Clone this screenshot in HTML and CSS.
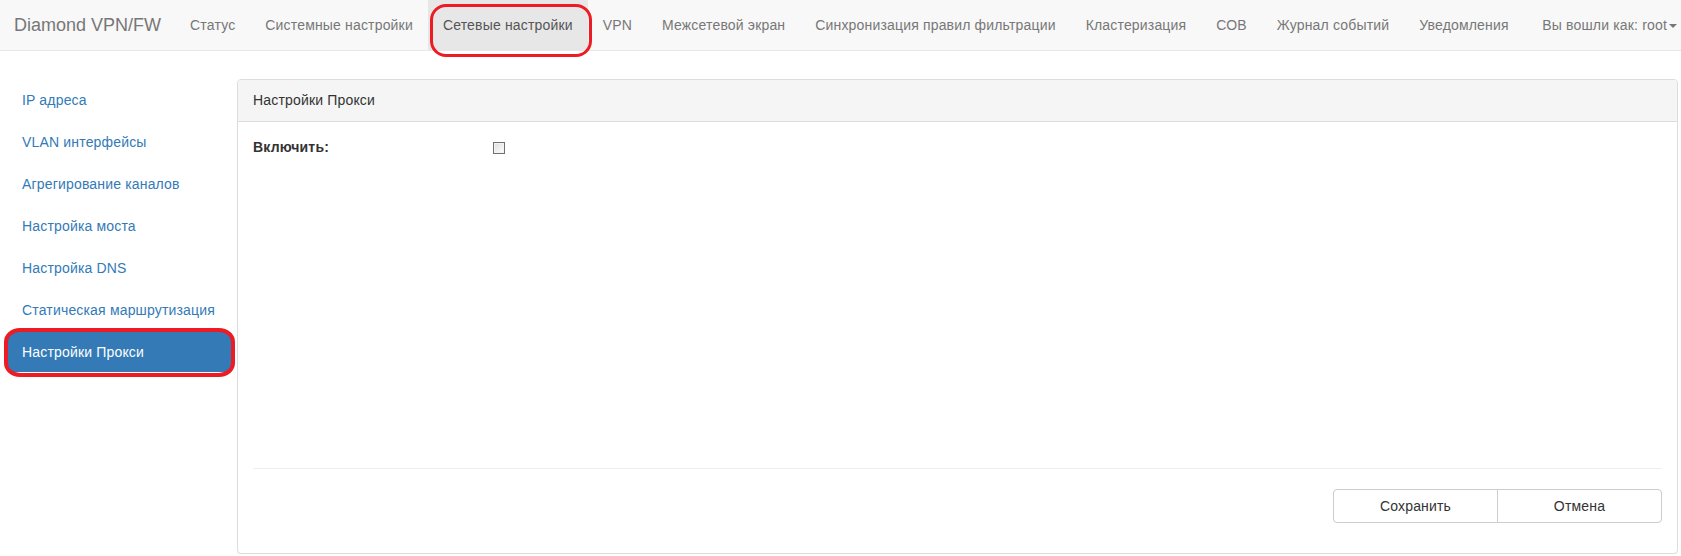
FILE: index.html
```html
<!DOCTYPE html>
<html lang="ru">
<head>
    <meta charset="UTF-8">
    <meta name="viewport" content="width=device-width, initial-scale=1.0">
    <title>Diamond VPN/FW - Настройки Прокси</title>
    <link rel="stylesheet" href="styles.css">
</head>
<body>

    <nav class="navbar">
        <a href="#" class="navbar-brand">Diamond VPN/FW</a>
        <ul class="nav-links">
            <li><a href="#">Статус</a></li>
            <li><a href="#">Системные настройки</a></li>
            <li class="active marked"><a href="#">Сетевые настройки</a></li>
            <li><a href="#">VPN</a></li>
            <li><a href="#">Межсетевой экран</a></li>
            <li><a href="#">Синхронизация правил фильтрации</a></li>
            <li><a href="#">Кластеризация</a></li>
            <li><a href="#">СОВ</a></li>
            <li><a href="#">Журнал событий</a></li>
            <li><a href="#">Уведомления</a></li>
        </ul>
        <ul class="nav-links nav-right">
            <li><a href="#" class="user-menu">Вы вошли как: root<span class="caret"></span></a></li>
        </ul>
    </nav>

    <div class="page">
        <ul class="side-nav">
            <li><a href="#">IP адреса</a></li>
            <li><a href="#">VLAN интерфейсы</a></li>
            <li><a href="#">Агрегирование каналов</a></li>
            <li><a href="#">Настройка моста</a></li>
            <li><a href="#">Настройка DNS</a></li>
            <li><a href="#">Статическая маршрутизация</a></li>
            <li class="active marked"><a href="#">Настройки Прокси</a></li>
        </ul>

        <div class="panel">
            <div class="panel-heading">Настройки Прокси</div>
            <div class="panel-body">
                <div class="form-fields">
                    <div class="form-row">
                        <label class="form-label" for="proxy-enable">Включить:</label>
                        <input type="checkbox" id="proxy-enable" class="check">
                    </div>
                </div>
                <hr class="divider">
                <div class="form-actions">
                    <div class="btn-group">
                        <button class="btn">Сохранить</button>
                        <button class="btn">Отмена</button>
                    </div>
                </div>
            </div>
        </div>
    </div>

</body>
</html>
```

FILE: styles.css
```css
* {
    box-sizing: border-box;
}
body {
    margin: 0;
    background-color: #ffffff;
    font-family: "Liberation Sans", Arial, sans-serif;
    font-size: 14px;
    line-height: 20px;
    letter-spacing: 0.17px;
    color: #333;
}
a {
    text-decoration: none;
}

/* top bar */
.navbar {
    display: flex;
    align-items: stretch;
    height: 51px;
    background-color: #f8f8f8;
    border-bottom: 1px solid #e7e7e7;
}
.navbar-brand {
    padding: 15px 14px 15px 14px;
    font-size: 18px;
    line-height: 20px;
    letter-spacing: 0;
    color: #777;
}
.nav-links {
    display: flex;
    margin: 0;
    padding: 0;
    list-style: none;
}
.nav-links li {
    position: relative;
}
.nav-links a {
    display: block;
    padding: 15px 15px;
    color: #777;
}
.nav-links .active a {
    background-color: #e7e7e7;
    color: #555;
}
.nav-right {
    margin-left: auto;
}
.nav-right .user-menu {
    padding-right: 4px;
}
.caret {
    display: inline-block;
    width: 0;
    height: 0;
    margin-left: 2px;
    vertical-align: middle;
    border-top: 4px solid #777;
    border-right: 4px solid transparent;
    border-left: 4px solid transparent;
}

/* red annotation rings from the original screenshot */
.marked::after {
    content: "";
    position: absolute;
    border: 3px solid #ed1c24;
    border-radius: 16px;
    pointer-events: none;
}
.nav-links .marked::after {
    left: 2px;
    right: -4px;
    top: 4px;
    bottom: -7px;
}
.side-nav .marked::after {
    left: -4px;
    right: -3px;
    top: -4px;
    bottom: -5px;
    border-width: 4px;
    border-radius: 16px / 14px;
}

/* page body */
.page {
    display: flex;
    align-items: flex-start;
    padding: 28px 3px 0 8px;
}
.side-nav {
    width: 224px;
    flex-shrink: 0;
    margin: 1px 5px 0 0;
    padding: 0;
    list-style: none;
}
.side-nav li {
    position: relative;
}
.side-nav li + li {
    margin-top: 2px;
}
.side-nav a {
    display: block;
    padding: 10px 14px;
    border-radius: 4px;
    color: #337ab7;
}
.side-nav .active a {
    background-color: #337ab7;
    color: #fff;
}

.panel {
    flex: 1;
    background-color: #fff;
    border: 1px solid #ddd;
    border-radius: 4px;
    box-shadow: 0 1px 1px rgba(0, 0, 0, 0.05);
}
.panel-heading {
    padding: 10px 15px 11px;
    background-color: #f5f5f5;
    border-bottom: 1px solid #ddd;
    border-radius: 3px 3px 0 0;
}
.panel-body {
    padding: 15px;
}
.form-fields {
    min-height: 311px;
}
.form-row {
    display: flex;
    align-items: center;
}
.form-label {
    width: 240px;
    font-weight: bold;
}
.check {
    appearance: none;
    -webkit-appearance: none;
    width: 12px;
    height: 12px;
    margin: 1px 0 0 0;
    border: 1px solid #707070;
    background: linear-gradient(135deg, #dcdcdc, #ffffff);
    box-shadow: inset 0 0 0 1px #f4f4f4;
}
.divider {
    margin: 20px 0;
    border: 0;
    border-top: 1px solid #eee;
}
.form-actions {
    display: flex;
    justify-content: flex-end;
    margin-bottom: 15px;
}
.btn-group {
    display: flex;
}
.btn {
    width: 165px;
    height: 34px;
    padding: 6px 12px;
    font-family: inherit;
    font-size: 14px;
    letter-spacing: inherit;
    color: #333;
    background-color: #fff;
    border: 1px solid #ccc;
    cursor: pointer;
}
.btn:first-child {
    border-radius: 4px 0 0 4px;
}
.btn + .btn {
    margin-left: -1px;
    border-radius: 0 4px 4px 0;
}
.btn:hover {
    background-color: #e6e6e6;
}
```
